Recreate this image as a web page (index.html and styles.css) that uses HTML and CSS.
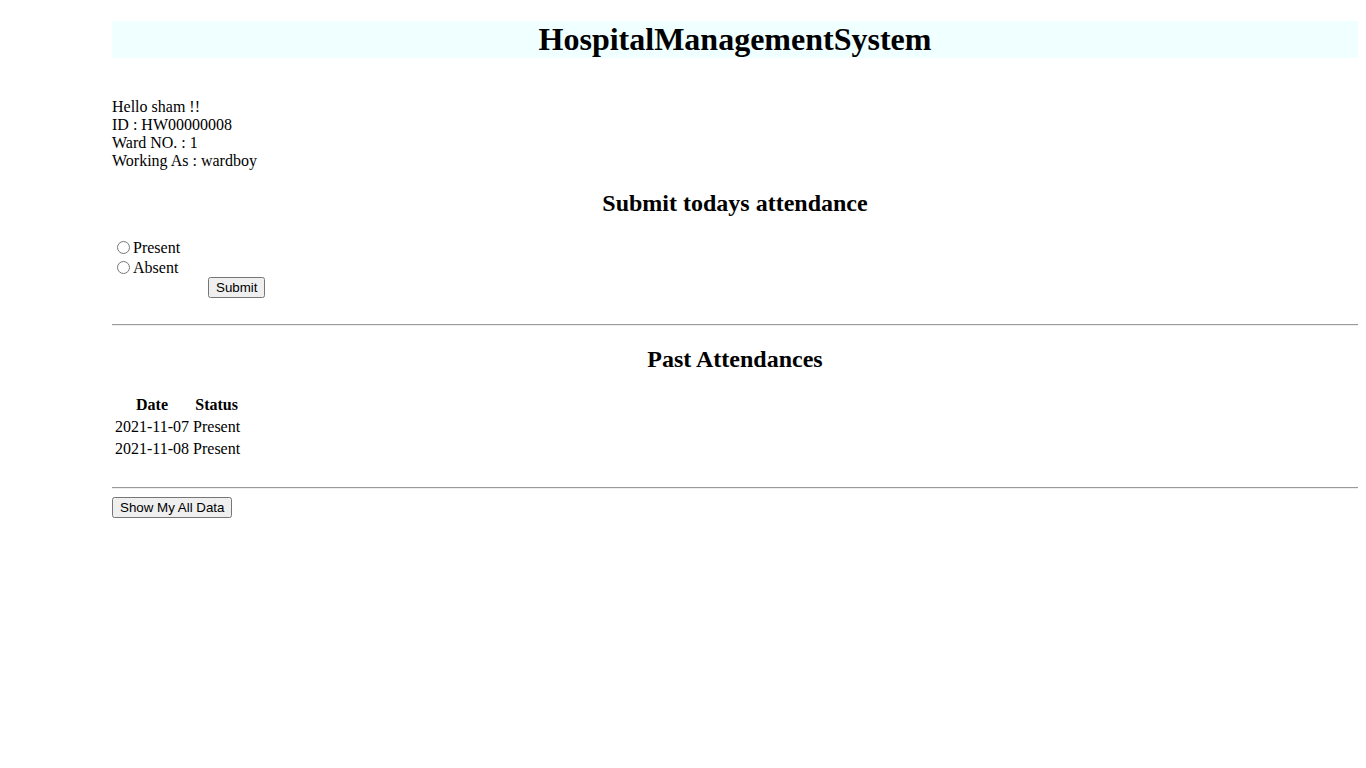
FILE: index.html
```html
<!DOCTYPE html>
<html>
<head>
<meta charset="utf-8">
<title>Hospital Management System</title>
<link rel="stylesheet" href="styles.css">
</head>
<body>
<div class="page">
  <h1 class="title">HospitalManagementSystem</h1>
  <div class="info">
    <div>Hello sham !!</div>
    <div>ID : HW00000008</div>
    <div>Ward NO. : 1</div>
    <div>Working As : wardboy</div>
  </div>
  <h2 class="section-title">Submit todays attendance</h2>
  <form class="attendance-form">
    <div class="radio-row"><input type="radio" name="status" id="present"><label for="present">Present</label></div>
    <div class="radio-row"><input type="radio" name="status" id="absent"><label for="absent">Absent</label></div>
    <div class="submit-row"><button type="button" class="btn submit-btn">Submit</button></div>
  </form>
  <hr class="divider">
  <h2 class="section-title">Past Attendances</h2>
  <table class="past-table">
    <thead>
      <tr><th>Date</th><th>Status</th></tr>
    </thead>
    <tbody>
      <tr><td>2021-11-07</td><td>Present</td></tr>
      <tr><td>2021-11-08</td><td>Present</td></tr>
    </tbody>
  </table>
  <hr class="divider">
  <button type="button" class="btn">Show My All Data</button>
</div>
</body>
</html>
```
FILE: styles.css
```css
html, body {
  font-family: "Liberation Serif", "Times New Roman", serif;
  font-size: 16px;
  color: #000;
  background: #fff;
}
body {
  margin: 0 8px 8px 8px;
  padding-top: 0.1px;
}
.page {
  margin-left: 104px;
}
.title {
  background: #f0ffff;
  text-align: center;
  font-size: 32px;
  font-weight: bold;
  margin: 21px 0 21.44px;
}
.info {
  margin-top: 40px;
  line-height: 18px;
}
.section-title {
  text-align: center;
  font-size: 24px;
  font-weight: bold;
  margin: 20px 0;
}
.attendance-form {
  margin: 0;
  padding-top: 1px;
}
.radio-row {
  height: 20px;
  display: flex;
  align-items: center;
}
.radio-row input {
  margin: -1px 3px 0 5px;
  width: 13px;
  height: 13px;
}
.submit-row {
  padding-left: 96px;
  margin-top: -1px;
  height: 21px;
  display: flex;
  align-items: center;
}
.btn {
  font-family: "Liberation Sans", Arial, sans-serif;
  font-size: 13.333px;
  padding: 1px 6px;
}
.divider {
  margin: 8px 0;
  border: 0;
  border-top: 1px solid #9a9a9a;
  border-bottom: 1px solid #eee;
  height: 0;
}
.attendance-form + .divider {
  margin-top: 26px;
}
.past-table {
  border-spacing: 2px;
  margin-bottom: 26px;
}
.past-table th, .past-table td {
  padding: 1px;
  line-height: 18px;
}
```
